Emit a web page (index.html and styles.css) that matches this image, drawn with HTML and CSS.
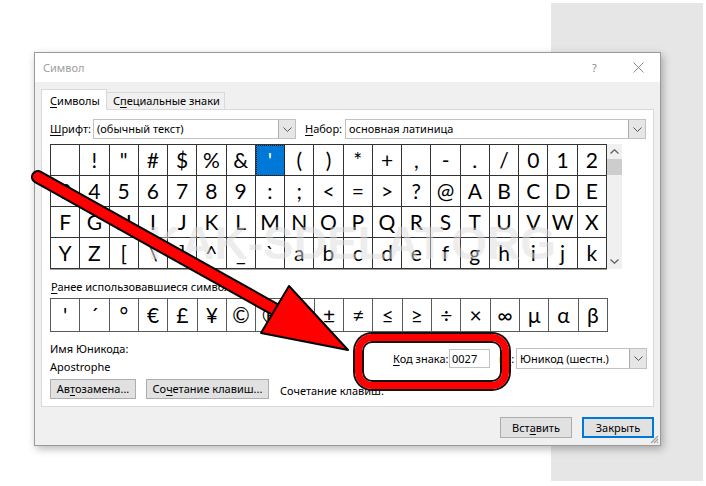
FILE: index.html
```html
<!DOCTYPE html>
<html lang="ru">
<head>
<meta charset="utf-8">
<title>Символ</title>
<link rel="stylesheet" href="styles.css">
</head>
<body>
<div class="side-page"></div>

<div class="dialog">
  <div class="titlebar">
    <span class="title">Символ</span>
    <span class="help">?</span>
    <span class="close"><svg width="11" height="11" viewBox="0 0 11 11"><path d="M0.5 0.5 L10.5 10.5 M10.5 0.5 L0.5 10.5" stroke="#8a8a8a" stroke-width="1" fill="none"/></svg></span>
  </div>
  <div class="body">
    <div class="tabs">
      <div class="tab tab-active"><u>С</u>имволы</div>
      <div class="tab tab-idle">С<u>п</u>ециальные знаки</div>
    </div>
    <div class="panel">
      <div class="font-row">
        <span class="lbl lbl-font"><u>Ш</u>рифт:</span>
        <div class="combo combo-font"><span class="combo-text">(обычный текст)</span><span class="combo-btn"><svg width="9" height="5" viewBox="0 0 9 5"><path d="M0.5 0.5 L4.5 4.5 L8.5 0.5" stroke="#555" fill="none"/></svg></span></div>
        <span class="lbl lbl-set"><u>Н</u>абор:</span>
        <div class="combo combo-set"><span class="combo-text">основная латиница</span><span class="combo-btn"><svg width="9" height="5" viewBox="0 0 9 5"><path d="M0.5 0.5 L4.5 4.5 L8.5 0.5" stroke="#555" fill="none"/></svg></span></div>
      </div>

      <div class="grid-area">
        <div class="grid">
          <span class="cell"></span><span class="cell">!</span><span class="cell">"</span><span class="cell">#</span><span class="cell">$</span><span class="cell">%</span><span class="cell">&amp;</span><span class="cell cell-sel">'</span><span class="cell">(</span><span class="cell">)</span><span class="cell">*</span><span class="cell">+</span><span class="cell">,</span><span class="cell">-</span><span class="cell">.</span><span class="cell">/</span><span class="cell">0</span><span class="cell">1</span><span class="cell">2</span>
          <span class="cell">3</span><span class="cell">4</span><span class="cell">5</span><span class="cell">6</span><span class="cell">7</span><span class="cell">8</span><span class="cell">9</span><span class="cell">:</span><span class="cell">;</span><span class="cell">&lt;</span><span class="cell">=</span><span class="cell">&gt;</span><span class="cell">?</span><span class="cell">@</span><span class="cell">A</span><span class="cell">B</span><span class="cell">C</span><span class="cell">D</span><span class="cell">E</span>
          <span class="cell">F</span><span class="cell">G</span><span class="cell">H</span><span class="cell">I</span><span class="cell">J</span><span class="cell">K</span><span class="cell">L</span><span class="cell">M</span><span class="cell">N</span><span class="cell">O</span><span class="cell">P</span><span class="cell">Q</span><span class="cell">R</span><span class="cell">S</span><span class="cell">T</span><span class="cell">U</span><span class="cell">V</span><span class="cell">W</span><span class="cell">X</span>
          <span class="cell">Y</span><span class="cell">Z</span><span class="cell">[</span><span class="cell">\</span><span class="cell">]</span><span class="cell">^</span><span class="cell">_</span><span class="cell">`</span><span class="cell">a</span><span class="cell">b</span><span class="cell">c</span><span class="cell">d</span><span class="cell">e</span><span class="cell">f</span><span class="cell">g</span><span class="cell">h</span><span class="cell">i</span><span class="cell">j</span><span class="cell">k</span>
        </div>
        <div class="scrollbar">
          <span class="sb-arrow"><svg width="9" height="5" viewBox="0 0 9 5"><path d="M0.5 4.5 L4.5 0.8 L8.5 4.5" stroke="#606060" stroke-width="1.3" fill="none"/></svg></span>
          <span class="sb-thumb"></span>
          <span class="sb-track"></span>
          <span class="sb-arrow"><svg width="9" height="5" viewBox="0 0 9 5"><path d="M0.5 0.5 L4.5 4.2 L8.5 0.5" stroke="#606060" stroke-width="1.3" fill="none"/></svg></span>
        </div>
      </div>

      <div class="recent-label"><u>Р</u>анее использовавшиеся символы:</div>
      <div class="recent">
        <span class="cell">'</span><span class="cell">´</span><span class="cell">°</span><span class="cell">€</span><span class="cell">£</span><span class="cell">¥</span><span class="cell">©</span><span class="cell">®</span><span class="cell">™</span><span class="cell">±</span><span class="cell">≠</span><span class="cell">≤</span><span class="cell">≥</span><span class="cell">÷</span><span class="cell">×</span><span class="cell">∞</span><span class="cell">µ</span><span class="cell">α</span><span class="cell">β</span>
      </div>

      <div class="info">
        <div class="info-left">
          <div class="line">Имя Юникода:</div>
          <div class="line line-name">Apostrophe</div>
        </div>
        <div class="code-group">
          <span class="lbl lbl-code"><u>К</u>од знака:</span>
          <span class="code-input">0027</span>
          <span class="lbl lbl-from">и<u>з</u>:</span>
          <div class="combo combo-enc"><span class="combo-text">Юникод (шестн.)</span><span class="combo-btn"><svg width="9" height="5" viewBox="0 0 9 5"><path d="M0.5 0.5 L4.5 4.5 L8.5 0.5" stroke="#555" fill="none"/></svg></span></div>
        </div>
      </div>

      <div class="btn-row">
        <span class="btn btn-auto">Ав<u>т</u>озамена...</span>
        <span class="btn btn-keys">Со<u>ч</u>етание клавиш...</span>
        <span class="keys-text">Сочетание клавиш:</span>
      </div>
    </div>

    <div class="footer">
      <span class="btn btn-insert">Вст<u>а</u>вить</span>
      <span class="btn btn-close">Закрыть</span>
    </div>
  </div>
  <svg class="grip" width="10" height="10" viewBox="0 0 10 10"><path d="M9 2 L2 9 M9 5 L5 9 M9 8 L8 9" stroke="#a0a0a0" stroke-width="1.2"/></svg>
</div>

<div class="watermark">KAK-SDELAT.ORG</div>

<svg class="arrow" width="706" height="486" viewBox="0 0 706 486">
  <path d="M38 177 L276 310" stroke="#000" stroke-width="14" stroke-linecap="round"/>
  <path d="M38 177 L276 310" stroke="#ff0000" stroke-width="10" stroke-linecap="round"/>
  <polygon points="261,333 289,286 348,350" fill="#ff0000" stroke="#000" stroke-width="2" stroke-linejoin="round"/>
</svg>

<div class="highlight"></div>
</body>
</html>
```

FILE: styles.css
```css
html, body {
  margin: 0;
  padding: 0;
}

body {
  position: relative;
  width: 706px;
  height: 486px;
  overflow: hidden;
  background: #ffffff;
  font-family: "Noto Sans", "Open Sans", sans-serif;
  font-size: 11px;
  line-height: 16px;
  color: #000;
  white-space: nowrap;
}

u {
  text-decoration: underline;
  text-underline-offset: 2px;
}

.side-page {
  position: absolute;
  left: 551px;
  top: 3px;
  width: 152px;
  height: 478px;
  background: #e6e6e6;
}

.dialog {
  position: absolute;
  left: 34px;
  top: 52px;
  width: 627px;
  height: 394px;
  box-sizing: border-box;
  border: 1px solid #9a9a9a;
  background: #f0f0f0;
  box-shadow: 2px 3px 8px rgba(0, 0, 0, 0.28);
  display: flex;
  flex-direction: column;
}

.titlebar {
  height: 29px;
  flex: none;
  background: #ffffff;
  display: flex;
  align-items: center;
  padding-left: 8px;
  color: #a0a0a0;
}

.title {
  flex: 1;
}

.help {
  width: 45px;
  text-align: center;
  color: #8a8a8a;
}

.close {
  width: 43px;
  display: flex;
  justify-content: center;
  align-items: center;
}

.body {
  flex: 1;
  padding: 7px 6px 0 6px;
  display: flex;
  flex-direction: column;
}

.tabs {
  display: flex;
  align-items: flex-end;
  height: 21px;
  margin-bottom: -1px;
  position: relative;
  z-index: 1;
}

.tab {
  box-sizing: border-box;
  padding-left: 8px;
  border: 1px solid #d9d9d9;
  border-bottom: none;
}

.tab-active {
  width: 66px;
  height: 21px;
  background: #ffffff;
  padding-top: 3px;
}

.tab-idle {
  width: 118px;
  height: 17px;
  margin-bottom: 1px;
  border-left: none;
  background: #f0f0f0;
  padding-left: 6px;
  line-height: 15px;
}

.panel {
  height: 298px;
  flex: none;
  box-sizing: border-box;
  background: #ffffff;
  border: 1px solid #d9d9d9;
  padding: 0 6px 0 8px;
}

.font-row {
  display: flex;
  align-items: center;
  height: 20px;
  margin-top: 9px;
}

.lbl-font {
  width: 43px;
}

.lbl-set {
  width: 40px;
  margin-left: 9px;
}

.combo {
  box-sizing: border-box;
  height: 20px;
  border: 1px solid #c2c2c2;
  background: #fff;
  display: flex;
  align-items: stretch;
}

.combo-text {
  flex: 1;
  padding-left: 3px;
  line-height: 18px;
  overflow: hidden;
}

.combo-btn {
  width: 16px;
  background: #e6e6e6;
  border-left: 1px solid #acacac;
  display: flex;
  align-items: center;
  justify-content: center;
}

.combo-font {
  width: 203px;
}

.combo-set {
  width: 301px;
}

.grid-area {
  display: flex;
  margin-top: 5px;
}

.grid {
  width: 556px;
  display: grid;
  grid-template-columns: repeat(19, 1fr);
  border-top: 1px solid #333;
  border-left: 1px solid #333;
  box-shadow: 0 1px 0 #a0a0a0;
}

.cell {
  height: 30px;
  border-right: 1px solid #333;
  border-bottom: 1px solid #333;
  display: flex;
  align-items: center;
  justify-content: center;
  font-family: "Lato", "Open Sans", sans-serif;
  font-size: 21px;
  color: #000;
}

.cell-sel {
  background: #0078d7;
  color: #ffffff;
  outline: 1px dotted #1a1a1a;
  outline-offset: -1px;
}

.scrollbar {
  width: 15px;
  height: 125px;
  background: #f0f0f0;
  display: flex;
  flex-direction: column;
}

.sb-arrow {
  height: 15px;
  display: flex;
  align-items: center;
  justify-content: center;
}

.sb-thumb {
  height: 16px;
  background: #cdcdcd;
}

.sb-track {
  flex: 1;
}

.recent-label {
  margin-top: 10px;
  padding-left: 1px;
}

.recent {
  margin-top: 3px;
  width: 557px;
  display: grid;
  grid-template-columns: repeat(19, 1fr);
  border: 1px solid #5a5a5a;
  border-right: none;
}

.recent .cell {
  height: 32px;
  border-bottom: none;
  border-right: 1px solid #5a5a5a;
}

.info {
  display: flex;
  margin-top: 9px;
}

.info-left {
  flex: 1;
}

.line-name {
  margin-top: 2px;
}

.code-group {
  display: flex;
  align-items: center;
  margin-top: 7px;
  height: 21px;
}

.lbl-code {
  width: 56px;
  box-sizing: border-box;
  padding-right: 4px;
  text-align: right;
  direction: ltr;
}

.code-input {
  box-sizing: border-box;
  width: 41px;
  height: 19px;
  border: 1px solid #c2c2c2;
  padding-left: 2px;
  line-height: 17px;
}

.lbl-from {
  width: 26px;
  box-sizing: border-box;
  padding-left: 9px;
}

.combo-enc {
  width: 131px;
  height: 21px;
}

.combo-enc .combo-text {
  line-height: 19px;
}

.btn-row {
  display: flex;
  align-items: center;
  margin-top: 4px;
}

.btn {
  box-sizing: border-box;
  height: 20px;
  background: #e1e1e1;
  border: 1px solid #adadad;
  display: flex;
  align-items: center;
  justify-content: center;
  line-height: 18px;
}

.btn-auto {
  width: 86px;
}

.btn-keys {
  width: 123px;
  margin-left: 10px;
}

.keys-text {
  margin-left: 11px;
  padding-top: 3px;
}

.footer {
  display: flex;
  justify-content: flex-end;
  padding-top: 10px;
  gap: 10px;
}

.btn-insert {
  width: 72px;
  height: 21px;
}

.btn-close {
  width: 72px;
  height: 21px;
  border: 2px solid #0078d7;
}

.grip {
  position: absolute;
  right: 1px;
  bottom: 1px;
}

.watermark {
  position: absolute;
  left: 148px;
  top: 218px;
  font-family: "Liberation Sans", "DejaVu Sans", sans-serif;
  font-weight: bold;
  font-size: 46px;
  line-height: 50px;
  letter-spacing: 0;
  color: rgba(220, 220, 220, 0.5);
  pointer-events: none;
}

.arrow {
  position: absolute;
  left: 0;
  top: 0;
  pointer-events: none;
}

.highlight {
  position: absolute;
  left: 355px;
  top: 334px;
  width: 154px;
  height: 55px;
  box-sizing: border-box;
  border: 7px solid #ff0000;
  border-radius: 17px;
  box-shadow: 0 0 0 2px #111, inset 0 0 0 2px #111;
  pointer-events: none;
}
```
